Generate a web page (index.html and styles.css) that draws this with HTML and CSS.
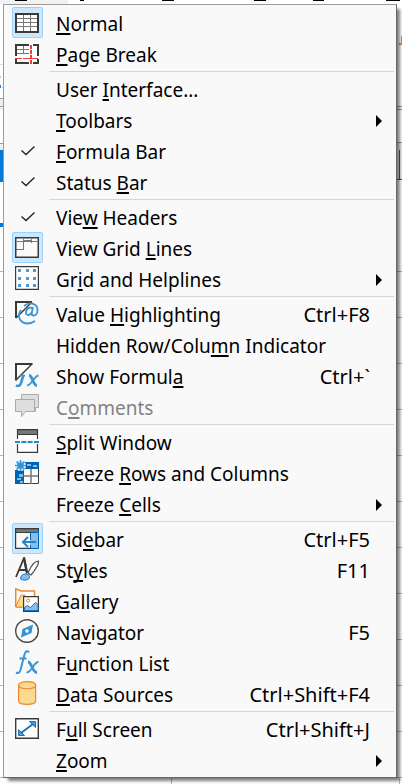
FILE: index.html
```
<!DOCTYPE html>
<html lang="en">
<head>
<meta charset="utf-8">
<meta name="viewport" content="width=device-width, initial-scale=1">
<title>View menu</title>
<link rel="stylesheet" href="styles.css">
</head>
<body>
<div class="sheet" aria-hidden="true">
  <svg class="strip strip-top" width="402" height="4"><path fill="#f2f2f2" d="M0 0h68v4H0z"/><path fill="#000" d="M15 0h12v1H15zM80 0h4v1h-4zM162 0h12v1h-12zM254 0h12v1h-12zM313 0h11v1h-11zM386 0h14v1h-14z"/></svg>
  <svg class="strip strip-left" width="4" height="784"><path fill="#f0f0f0" d="M0 99h4v11H0zM0 143h4v7H0z"/><path fill="#ddd" d="M0 64h4v1H0z"/><path fill="#8fdcf5" d="M0 76h1v2H0z"/><path fill="#1e7fd8" d="M0 85h1v3H0z"/><path fill="#f5c842" d="M2 87h1v1H2z"/><path fill="#999" d="M0 98h4v1H0zM0 106h4v1H0zM0 143h4v1H0z"/><path fill="#0078d7" d="M0 150h4v32H0zM0 223h4v4H0z"/></svg>
  <svg class="strip strip-right" width="6" height="784"><path fill="#f0f0f0" d="M0 143h6v36H0z"/><path fill="#f08a38" d="M3 43h3v2H3zM5 36h1v7H5z"/><path fill="#999" d="M0 106h6v1H0zM0 109h6v1H0zM0 142h6v1H0z"/><path fill="#555" d="M3 150h1v29H3zM0 179h6v1H0z"/></svg>
  <svg class="strip strip-bottom" width="402" height="6"><path fill="#b4b4b4" d="M171 0h1v6h-1zM399 0h1v6h-1z"/></svg>
</div>
<nav class="menu" aria-label="View">
  <ul class="group">
    <li><button class="item"><span class="mark on"><svg class="icon" viewBox="0 0 24 24"><path fill="#fff" d="M1 4h22v18H1z"/><path fill="none" stroke="#777" d="M1 8.500h22M1 12.500h22M1 16.500h22M8.500 5v17M15.500 5v17"/><path fill="none" stroke="#3a3a38" stroke-width="2" d="M1 4h22v18H1z"/></svg></span><span class="label"><u>N</u>ormal</span></button></li>
    <li><button class="item"><span class="mark"><svg class="icon" viewBox="0 0 24 24"><path fill="#fff" d="M1 4h22v18H1z"/><path fill="none" stroke="#777" d="M1 8.500h13M1 12.500h13M8.500 4v9"/><path fill="none" stroke="#3a3a38" stroke-width="2" d="M14 4H1v11M18 4h5v11M1 18v4h13M18 22h5v-4"/><path fill="none" stroke="#ed3d3b" stroke-width="2" stroke-dasharray="4 1" d="M16 4v19"/><path fill="none" stroke="#ed3d3b" stroke-dasharray="7 1" d="M0 17.500h24"/></svg></span><span class="label"><u>P</u>age Break</span></button></li>
  </ul>
  <ul class="group">
    <li><button class="item"><span class="mark"></span><span class="label">User <u>I</u>nterface...</span></button></li>
    <li><button class="item" aria-haspopup="menu"><span class="mark"></span><span class="label"><u>T</u>oolbars</span><span class="arrow"></span></button></li>
    <li><button class="item"><span class="mark"><svg class="icon" viewBox="0 0 24 24"><path fill="none" stroke="#222" stroke-width="1.400" d="M6.500 12.500l4.500 4L19.500 8.500"/></svg></span><span class="label"><u>F</u>ormula Bar</span></button></li>
    <li><button class="item"><span class="mark"><svg class="icon" viewBox="0 0 24 24"><path fill="none" stroke="#222" stroke-width="1.400" d="M6.500 12.500l4.500 4L19.500 8.500"/></svg></span><span class="label">Status <u>B</u>ar</span></button></li>
  </ul>
  <ul class="group">
    <li><button class="item"><span class="mark"><svg class="icon" viewBox="0 0 24 24"><path fill="none" stroke="#222" stroke-width="1.400" d="M6.500 12.500l4.500 4L19.500 8.500"/></svg></span><span class="label">Vie<u>w</u> Headers</span></button></li>
    <li><button class="item"><span class="mark on"><svg class="icon" viewBox="0 0 24 24"><path fill="#fafafa" d="M1 3h22v19H1z"/><path fill="none" stroke="#777" d="M8.500 4v10M1 14.500h8M2 6.500h20M16.500 4v4"/><path stroke="#777" stroke-width="2" d="M8 6h9"/><path fill="none" stroke="#3a3a38" stroke-width="1.500" d="M.75 2.750h22.500v19.500H.75z"/></svg></span><span class="label">View Grid <u>L</u>ines</span></button></li>
    <li><button class="item" aria-haspopup="menu"><span class="mark"><svg class="icon" viewBox="0 0 24 24"><path fill="#fff" stroke="#3a3a38" stroke-width="1.200" d="M.6.600h22.800v22.800H.6z"/><path fill="#4a9bd3" d="M3 3h3v3H3zm8 0h3v3h-3zm7 0h3v3h-3zM3 11h3v3H3zm8 0h3v3h-3zm7 0h3v3h-3zM3 18h3v3H3zm8 0h3v3h-3zm7 0h3v3h-3z"/></svg></span><span class="label">Gr<u>i</u>d and Helplines</span><span class="arrow"></span></button></li>
  </ul>
  <ul class="group">
    <li><button class="item"><span class="mark"><svg class="icon" viewBox="0 0 24 24"><path fill="#fff" d="M1 1h16L1 17z"/><path fill="none" stroke="#3a3a38" stroke-width="2" d="M17 1H1v16"/><path fill="none" stroke="#3a3a38" stroke-width="1.500" d="M1 17L17 1"/><g fill="none" stroke="#3a96d2" stroke-width="1.800"><path d="M9 5c6-5 14-2 13.500 4.500-.2 3-2 5-4 5-2.500 0-2-2-1.500-4L18 6"/><path d="M17.500 8c-1-3-6-1-6.500 3-.4 4 4 4 6 0M6 9C2 14 4 22 12 22.500c3.500 0 6-1 8-2.500"/></g></svg></span><span class="label">Value <u>H</u>ighlighting</span><kbd>Ctrl+F8</kbd></button></li>
    <li><button class="item"><span class="mark"></span><span class="label">Hidden Row/Colu<u>m</u>n Indicator</span></button></li>
    <li><button class="item"><span class="mark"><svg class="icon" viewBox="0 0 24 24"><path fill="#fff" d="M1 1h16L1 17z"/><path fill="none" stroke="#3a3a38" stroke-width="2" d="M17.500 1H1v16.500"/><path fill="none" stroke="#3a3a38" stroke-width="1.500" d="M1 17L17 1"/><g fill="none" stroke="#3a96d2"><path stroke-width="2.600" d="M8.500 12L6 20c-.8 3-3 3.500-5 2.500"/><path stroke-width="1.500" d="M5 12.500h5"/><path stroke-width="2.800" d="M14 12.500c4 0 3.500 10 8 10"/><path stroke-width="1.800" d="M23.500 12.500c-4 0-7 10-11.500 10"/></g></svg></span><span class="label">Show Formul<u>a</u></span><kbd>Ctrl+`</kbd></button></li>
    <li><button class="item" disabled><span class="mark"><svg class="icon" viewBox="0 0 24 24"><path fill="#dedede" stroke="#aaa" d="M6.500.5h17v13h-3v4l-4-4h-10z"/><path fill="#dedede" stroke="#aaa" d="M.5 5.500h19v12h-9l-4 5v-5h-6z"/></svg></span><span class="label">C<u>o</u>mments</span></button></li>
  </ul>
  <ul class="group">
    <li><button class="item"><span class="mark"><svg class="icon" viewBox="0 0 24 24"><path fill="#fff" d="M2 0h21v24H2z"/><path fill="#777" d="M3 1h19v4H3z"/><path fill="none" stroke="#3a3a38" stroke-width="1.200" d="M2.500 10V.6h20V10M2.500 15v8.400h20V15M3 5.500h19"/><path fill="#fafafa" d="M0 10h24v5H0z"/><path stroke="#2189cc" stroke-width="2" stroke-dasharray="5 1.300" d="M0 13h24"/></svg></span><span class="label"><u>S</u>plit Window</span></button></li>
    <li><button class="item"><span class="mark"><svg class="icon" viewBox="0 0 24 24"><path fill="#fff" stroke="#3a3a38" d="M8.500 7.500h15v16h-15z"/><path stroke="#777" stroke-width="1.500" d="M16 9v15M9 16h14"/><path fill="#0063b1" d="M0 10h9v14H0zM10 2h14v7H10z"/><path fill="#83beec" d="M12 4h4v2h-4zm6 1h4v2h-4zM4 14h4v3H4zm-2 4h4v2H2zm3 3h3v2H5z"/><circle cx="5.500" cy="5.500" r="5.500" fill="#cce8fa"/><path fill="none" stroke="#3294d3" stroke-width="1.200" d="M5.500 0v11M0 5.500h11M1.500 1.500l8 8M9.500 1.500l-8 8M3 3h5v5H3z"/></svg></span><span class="label">Freeze <u>R</u>ows and Columns</span></button></li>
    <li><button class="item" aria-haspopup="menu"><span class="mark"></span><span class="label">Freeze <u>C</u>ells</span><span class="arrow"></span></button></li>
  </ul>
  <ul class="group">
    <li><button class="item"><span class="mark on"><svg class="icon" viewBox="0 0 24 24"><path fill="#fafafa" d="M1 3h22v20H1z"/><path fill="#83beec" d="M15 6h8v17h-8z"/><path fill="#777" d="M0 2h24v4H0z"/><path fill="none" stroke="#3a3a38" stroke-width="1.200" d="M16 22.400H.6V2.600h22.800v3M1 6.500h22"/><path fill="none" stroke="#0063b1" d="M15.500 14V6.500h8v16h-8V19"/><path fill="none" stroke="#2583c8" stroke-width="2" d="M21 16H8M13 11l-5 5 5 5"/></svg></span><span class="label">Sid<u>e</u>bar</span><kbd>Ctrl+F5</kbd></button></li>
    <li><button class="item"><span class="mark"><svg class="icon" viewBox="0 0 24 24"><path fill="none" stroke="#3a3a38" stroke-width="1.800" d="M1 20L9 1l3 15M4 13h7"/><path fill="#3a3a38" d="M8 2l2-2 3 15-2 2z"/><path fill="#fff" stroke="#4a4a48" stroke-width="1.200" d="M23.500 4c-4 0-8 6-10.500 12l3 2c3-4 8-9 7.500-14z"/><path fill="#83beec" stroke="#1e73bd" d="M5.500 22c0-3 2-5 5-5 4 0 5 3 3 5-2 1.500-5 1.500-8 0z"/></svg></span><span class="label">St<u>y</u>les</span><kbd>F11</kbd></button></li>
    <li><button class="item"><span class="mark"><svg class="icon" viewBox="0 0 24 24"><path fill="#fff" stroke="#ed8733" stroke-width="1.500" d="M.75 19V.75L6 3h13.500v5M.75 19H7"/><path fill="#f8db8f" stroke="#ed8733" d="M1 18L6 7h4v12H1z"/><path fill="#fff" stroke="#3a3a38" stroke-width="1.200" d="M8.600 8.600h14.800v14.800H8.600z"/><circle cx="13" cy="12.500" r="1.600" fill="#fff" stroke="#ed8733"/><path fill="#83beec" stroke="#1e73bd" d="M9.500 22.500v-3l3-2 3 2 5-5 2.500 2v6z"/></svg></span><span class="label"><u>G</u>allery</span></button></li>
    <li><button class="item"><span class="mark"><svg class="icon" viewBox="0 0 24 24"><circle cx="12" cy="12" r="11.300" fill="#fafafa" stroke="#4a4a48" stroke-width="1.400"/><path fill="#3294d3" d="M18 5.500L16.500 14 6 18.500 7.500 10z"/><circle cx="12" cy="12" r="1.800" fill="#fff"/></svg></span><span class="label">Na<u>v</u>igator</span><kbd>F5</kbd></button></li>
    <li><button class="item"><span class="mark"><svg class="icon" viewBox="0 0 24 24"><g fill="none" stroke="#3a96d2"><path stroke-width="2" d="M14 2.500c-1-2-3.500-2-4.500 2L5.500 20c-.8 3-2.500 3.500-4.500 2.500M4.500 8.500h7"/><path stroke-width="2.800" d="M13 12c4 0 4 10.500 9 10.500"/><path stroke-width="1.800" d="M23.500 12C19 11.500 16.500 23 11.500 22.500"/></g></svg></span><span class="label">F<u>u</u>nction List</span></button></li>
    <li><button class="item"><span class="mark"><svg class="icon" viewBox="0 0 24 24"><path fill="#f8db8f" stroke="#ed8733" stroke-width="1.200" d="M3.600 4v16c0 4.500 17 4.500 17 0V4c0-4.500-17-4.500-17 0z"/><path fill="none" stroke="#ed8733" stroke-width="1.200" d="M3.600 4c0 5 17 5 17 0"/></svg></span><span class="label"><u>D</u>ata Sources</span><kbd>Ctrl+Shift+F4</kbd></button></li>
  </ul>
  <ul class="group">
    <li><button class="item"><span class="mark"><svg class="icon" viewBox="0 0 24 24"><path fill="#fff" stroke="#3a3a38" stroke-width="1.400" d="M.7 2.700h22.600v19.600H.7z"/><path fill="#4a9bd8" stroke="#1e73bd" d="M14.500 5.500h6v6zM3.500 13.500v6h6z"/><path stroke="#1e73bd" stroke-width="2" d="M18 8L6 17"/></svg></span><span class="label">F<u>u</u>ll Screen</span><kbd>Ctrl+Shift+J</kbd></button></li>
    <li><button class="item" aria-haspopup="menu"><span class="mark"></span><span class="label"><u>Z</u>oom</span><span class="arrow"></span></button></li>
  </ul>
</nav>
</body>
</html>
```
FILE: styles.css
```
* { box-sizing: border-box; }

body {
  position: relative;
  margin: 0;
  padding: 4px 5px 6px 3px;
  background: #fff repeating-linear-gradient(#fff 0 45px, #b4b4b4 45px 46px) 0 226px no-repeat;
  color: #000;
  font: 19px/24px "Noto Sans", "Open Sans", sans-serif;
}

.strip { position: absolute; top: 0; }
.strip-top, .strip-left, .strip-bottom { left: 0; }
.strip-right { right: 0; }
.strip-bottom { top: auto; bottom: 0; }

.menu {
  position: relative;
  padding: 2px 0;
  background: #f9f9f9;
  border: 1px solid #9a9a9a;
  border-right-color: #666;
  border-bottom-color: #666;
  box-shadow: 4px 4px 3px -1px rgba(0, 0, 0, 0.5);
}

.group { margin: 0; padding: 0; list-style: none; }

.group + .group::before {
  content: "";
  display: block;
  height: 1px;
  margin: 2px 2px 1px 45px;
  background: #d5d5d5;
}

.item {
  display: flex;
  align-items: center;
  width: 100%;
  height: 31px;
  padding: 0 26px 0 8px;
  border: 0;
  background: none;
  color: inherit;
  font: inherit;
  text-align: left;
  white-space: nowrap;
}

.item:disabled { color: #838383; }

.mark {
  flex: none;
  width: 31px;
  height: 31px;
  margin-right: 13px;
  padding: 2px;
  border: 1px solid transparent;
  border-radius: 2px;
}

.mark.on { background: #cce8ff; border-color: #99d1ff; }

.icon { display: block; width: 24px; height: 24px; }

.label, kbd, .arrow { margin-top: 2px; }

.label { flex: 1; }

.label u {
  text-decoration: underline 2px;
  text-underline-offset: 2px;
  text-decoration-skip-ink: none;
}

kbd {
  font: inherit;
  font-size: 20px;
}

.arrow {
  margin-right: -12px;
  border: solid transparent;
  border-width: 6px 0 6px 6px;
  border-left-color: #000;
}
```
